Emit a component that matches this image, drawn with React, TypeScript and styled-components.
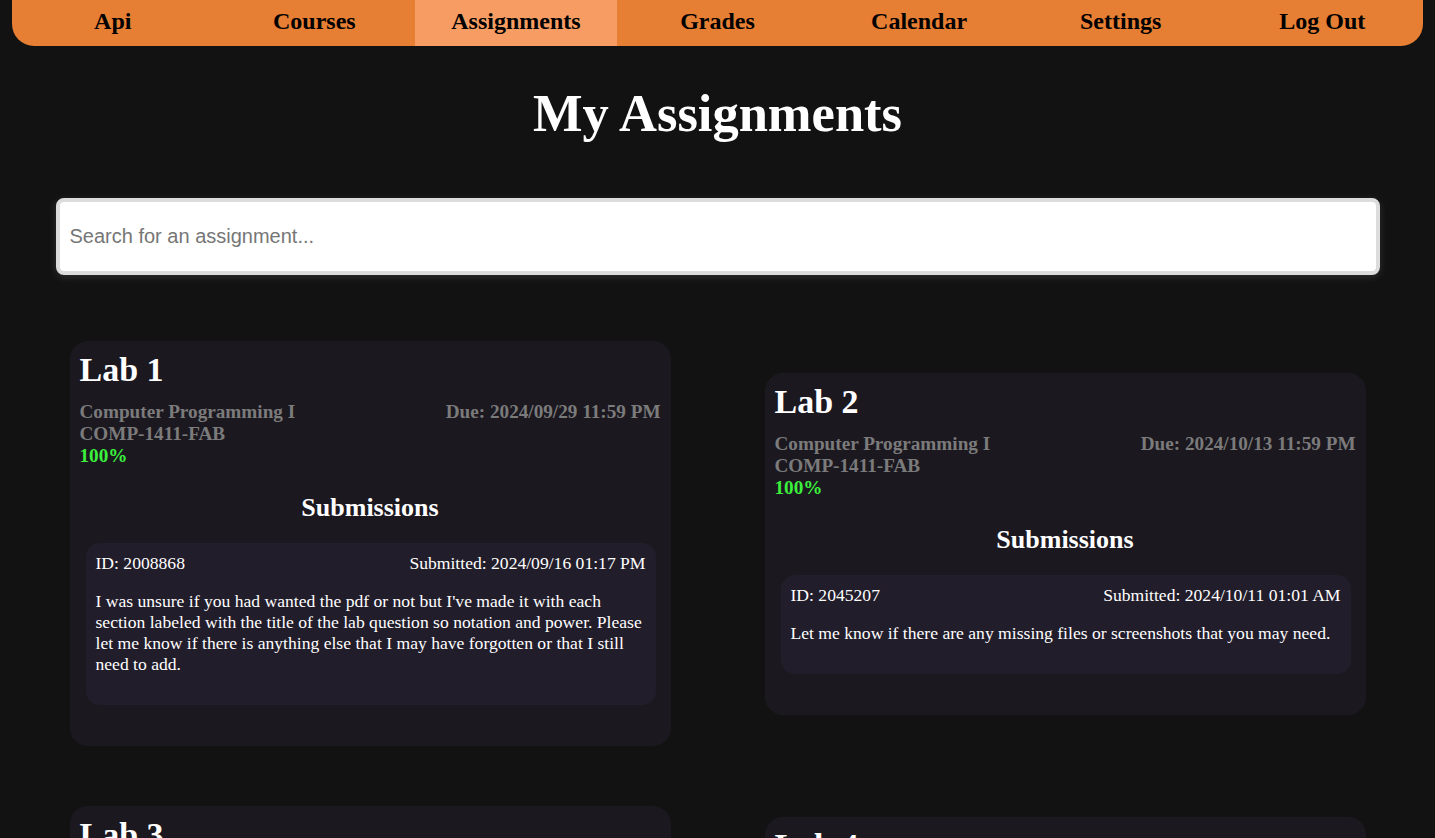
import React from 'react'
import styled, { createGlobalStyle } from 'styled-components'

const GlobalStyle = createGlobalStyle`
  html, body {
    margin: 0;
    padding: 0;
    background: #121212;
    font-family: "Liberation Serif", "Times New Roman", serif;
    color: #ffffff;
  }
  body {
    overflow: hidden;
  }
`

interface Submission {
  id: string
  submitted: string
  comment: string
}

interface Assignment {
  title: string
  course: string
  code: string
  due: string
  grade: string
  submissions: Submission[]
}

const assignments: Assignment[] = [
  {
    title: 'Lab 1',
    course: 'Computer Programming I',
    code: 'COMP-1411-FAB',
    due: '2024/09/29 11:59 PM',
    grade: '100%',
    submissions: [
      {
        id: '2008868',
        submitted: '2024/09/16 01:17 PM',
        comment:
          "I was unsure if you had wanted the pdf or not but I've made it with each section labeled with the title of the lab question so notation and power. Please let me know if there is anything else that I may have forgotten or that I still need to add.",
      },
    ],
  },
  {
    title: 'Lab 2',
    course: 'Computer Programming I',
    code: 'COMP-1411-FAB',
    due: '2024/10/13 11:59 PM',
    grade: '100%',
    submissions: [
      {
        id: '2045207',
        submitted: '2024/10/11 01:01 AM',
        comment: 'Let me know if there are any missing files or screenshots that you may need.',
      },
    ],
  },
  {
    title: 'Lab 3',
    course: 'Computer Programming I',
    code: 'COMP-1411-FAB',
    due: '2024/10/27 11:59 PM',
    grade: '100%',
    submissions: [
      {
        id: '2081934',
        submitted: '2024/10/24 09:42 PM',
        comment:
          'All of the source files and the output screenshots are included in the zip folder. Let me know if anything does not compile on your end.',
      },
    ],
  },
  {
    title: 'Lab 4',
    course: 'Computer Programming I',
    code: 'COMP-1411-FAB',
    due: '2024/11/10 11:59 PM',
    grade: '100%',
    submissions: [
      {
        id: '2113506',
        submitted: '2024/11/08 04:25 PM',
        comment: 'Here is my submission for the fourth lab.',
      },
    ],
  },
]

const navItems = ['Api', 'Courses', 'Assignments', 'Grades', 'Calendar', 'Settings', 'Log Out']

const Page = styled.div`
  display: flex;
  flex-direction: column;
  align-items: center;
  min-height: 100vh;
`

const NavBar = styled.nav`
  align-self: stretch;
  margin: 0 12px;
  height: 46px;
  display: flex;
  background: #e67e33;
  border-radius: 0 0 22px 22px;
  overflow: hidden;
`

const NavItem = styled.a<{ $active?: boolean }>`
  flex: 1;
  display: flex;
  align-items: center;
  justify-content: center;
  padding-bottom: 4px;
  font-weight: 700;
  font-size: 24px;
  color: #000000;
  text-decoration: none;
  background: ${(p) => (p.$active ? '#f79d63' : 'transparent')};
  cursor: pointer;
`

const Title = styled.h1`
  margin: 37px 0 0;
  font-size: 52.5px;
  font-weight: 700;
  line-height: 60px;
  color: #ffffff;
`

const SearchInput = styled.input`
  box-sizing: border-box;
  margin-top: 55px;
  width: 1324px;
  height: 77px;
  padding: 0 10px;
  border: 4px solid #dcdcdc;
  border-radius: 8px;
  background: #ffffff;
  box-shadow: 0 2px 8px rgba(255, 255, 255, 0.12);
  font-family: "Liberation Sans", Arial, sans-serif;
  font-size: 20px;
  color: #222;
  outline: none;

  &::placeholder {
    color: #767676;
  }
`

const Grid = styled.div`
  box-sizing: border-box;
  width: 1324px;
  margin-top: 66px;
  padding: 0 14px;
  display: grid;
  grid-template-columns: 1fr 1fr;
  column-gap: 94px;
  row-gap: 60px;
  align-items: center;
`

const Card = styled.div`
  background: #1b1820;
  border-radius: 18px;
  padding: 10px;
`

const CardTitle = styled.h2`
  margin: 0;
  font-size: 34px;
  font-weight: 700;
  line-height: 1.1;
  color: #ffffff;
`

const Meta = styled.div`
  margin-top: 13px;
  font-size: 19.2px;
  font-weight: 700;
  line-height: 22px;
  color: #7b7b7b;
`

const MetaRow = styled.div`
  display: flex;
  justify-content: space-between;
`

const Grade = styled.div`
  color: #3cf03c;
`

const SubHeading = styled.h3`
  margin: 26px 0 0;
  text-align: center;
  font-size: 26px;
  font-weight: 700;
  line-height: 30px;
  color: #ffffff;
`

const SubmissionBox = styled.div`
  margin: 20px 5px 31px 6px;
  padding: 10px;
  background: #221d2b;
  border-radius: 14px;
  font-size: 17.6px;
  line-height: 21px;
  color: #ffffff;
`

const SubmissionHeader = styled.div`
  display: flex;
  justify-content: space-between;
`

const Comment = styled.p`
  margin: 17px 0 20px;
`

function AssignmentCard({ a }: { a: Assignment }) {
  return (
    <Card>
      <CardTitle>{a.title}</CardTitle>
      <Meta>
        <MetaRow>
          <span>{a.course}</span>
          <span>Due: {a.due}</span>
        </MetaRow>
        <div>{a.code}</div>
        <Grade>{a.grade}</Grade>
      </Meta>
      <SubHeading>Submissions</SubHeading>
      {a.submissions.map((s) => (
        <SubmissionBox key={s.id}>
          <SubmissionHeader>
            <span>ID: {s.id}</span>
            <span>Submitted: {s.submitted}</span>
          </SubmissionHeader>
          <Comment>{s.comment}</Comment>
        </SubmissionBox>
      ))}
    </Card>
  )
}

export default function App() {
  return (
    <>
      <GlobalStyle />
      <Page>
        <NavBar>
          {navItems.map((item) => (
            <NavItem key={item} $active={item === 'Assignments'}>
              {item}
            </NavItem>
          ))}
        </NavBar>
        <Title>My Assignments</Title>
        <SearchInput placeholder="Search for an assignment..." />
        <Grid>
          {assignments.map((a) => (
            <AssignmentCard key={a.title} a={a} />
          ))}
        </Grid>
      </Page>
    </>
  )
}
